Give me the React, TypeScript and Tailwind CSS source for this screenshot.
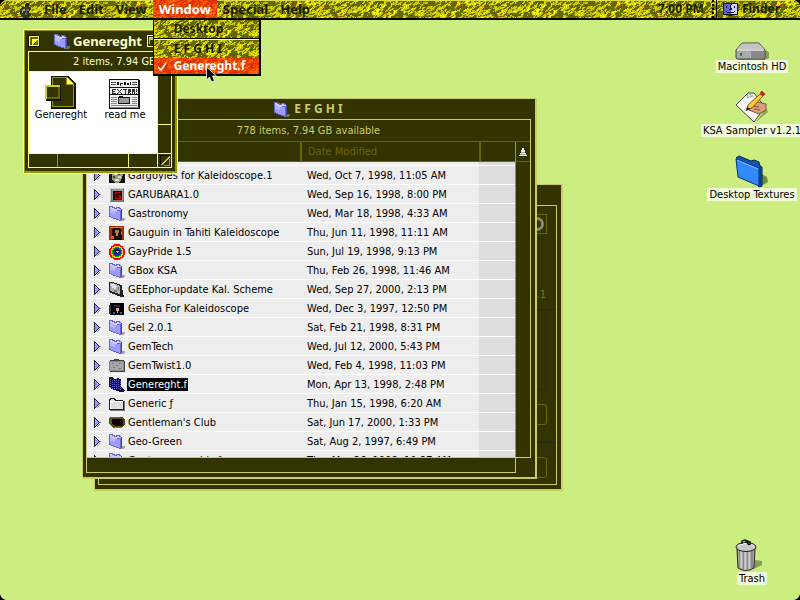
import type { ReactNode } from "react";

/* ---------- texture of the menu theme ---------- */

const TILE_W = 160;
const TILE_H = 20;

function hash(a: number, b: number) {
  let h = (a * 374761393 + b * 668265263) | 0;
  h = Math.imul(h ^ (h >>> 13), 1274126177);
  return ((h ^ (h >>> 16)) >>> 0) / 4294967295;
}

function smoothNoise(u: number, v: number) {
  const i = Math.floor(u);
  const j = Math.floor(v);
  const f = u - i;
  const g = v - j;
  const top = hash(i, j) * (1 - f) + hash(i + 1, j) * f;
  const low = hash(i, j + 1) * (1 - f) + hash(i + 1, j + 1) * f;
  return top * (1 - g) + low * g;
}

/* One path per tone: 0 deep, 1 middle, 2 light, 3 glow, 4 red fleck, 5 green fleck. */
function buildTexture() {
  const paths = ["", "", "", "", "", ""];
  for (let y = 0; y < TILE_H; y++) {
    for (let x = 0; x < TILE_W; x++) {
      const n = smoothNoise((x - y + 400) / 4, (x + y * 1.4) / 2.2) + (hash(x + 900, y) - 0.5) * 0.3;
      const fleck = hash(x, y + 500);
      let tone = n < 0.49 ? 0 : n < 0.55 ? 1 : n < 0.84 ? 2 : 3;
      if (fleck > 0.988) tone = 4;
      else if (fleck < 0.006) tone = 5;
      paths[tone] += `M${x} ${y}h1v1h-1z`;
    }
  }
  return paths;
}

const TEXTURE = buildTexture();
const GOLD = ["#666600", "#999900", "#cccc00", "#ffff00", "#ff6600", "#339900"];
const FIRE = ["#dd3300", "#ee4400", "#ff5500", "#ff7700", "#cc2200", "#996600"];

function Texture({ id, tones }: { id: string; tones: string[] }) {
  return (
    <svg className="absolute inset-0 h-full w-full" shapeRendering="crispEdges" aria-hidden="true">
      <defs>
        <pattern id={id} width={TILE_W} height={TILE_H} patternUnits="userSpaceOnUse">
          {TEXTURE.map((d, i) => (
            <path key={i} d={d} fill={tones[i]} />
          ))}
        </pattern>
      </defs>
      <rect width="100%" height="100%" fill={`url(#${id})`} />
    </svg>
  );
}

/* ---------- small icons ---------- */

type IconKind =
  | "folder" | "gargoyle" | "garubara" | "gauguin" | "pride" | "grayfolder"
  | "geisha" | "twist" | "selected" | "plain" | "club";

function FolderArt() {
  return (
    <>
      <path d="M12 13h4v2h-1v1h-3z" fill="#888888" opacity=".7" />
      <path d="M0 1h4v1h2v1h1V2h4v1h1v1h1v11h-1v1h-2v-1H7v-1H4v-1H2v-1H0z" fill="#6666cc" />
      <path d="M1 2h2v1h2v1h3V3h2v1h2v1H8v1H5V5H3V4H1z" fill="#ccccff" />
      <path d="M1 4h2v1h2v1h7v9h-2v-1H7v-1H4v-1H2v-1H1z" fill="#9c9cff" />
      <path d="M1 4h2v1h2v1h1v3H4V8H1z" fill="#b8b8ff" />
      <path d="M11 5h1v10h-1z" fill="#6666cc" />
      <path d="M12 4h1v11h-1z" fill="#444499" />
    </>
  );
}

function MiniIcon({ kind }: { kind: IconKind }) {
  const art: Record<IconKind, ReactNode> = {
    folder: <FolderArt />,
    gargoyle: (
      <>
        <path d="M0 4h16v12H0z" fill="#111" />
        <path d="M3 4h9l2 4-2 6-3 2H6l-3-4z" fill="#998" />
        <path d="M5 6h3v2H5zM9 9h3v2H9zM6 12h4v2H6z" fill="#ddc" />
        <path d="M4 9h2v2H4zM9 6h2v2H9z" fill="#443" />
      </>
    ),
    garubara: (
      <>
        <path d="M1 2h14v14H1z" fill="#777" />
        <path d="M1 2h13v1H2v12H1z" fill="#ccc" />
        <path d="M3 3h11v11H3z" fill="#999" />
        <path d="M4 5h9v9H4z" fill="#300" />
        <path d="M6 6h5v1H7v5h3v-2H9V9h3v4H6z" fill="#c00" />
      </>
    ),
    gauguin: (
      <>
        <path d="M0 2h15v14H0z" fill="#a33000" />
        <path d="M1 3h13v1H1z" fill="#dd7722" />
        <path d="M4 4h7l2 5v7H3V7z" fill="#150800" />
        <path d="M6 6h4v3H9v3H7V9H6z" fill="#bb7744" />
        <path d="M2 12h3v3H2zM12 8h1v3h-1z" fill="#ee5522" />
      </>
    ),
    pride: (
      <>
        <circle cx="8" cy="9" r="8" fill="#f00" />
        <circle cx="8" cy="9" r="6.500" fill="#fc0" />
        <circle cx="8" cy="9" r="5" fill="#0a0" />
        <circle cx="8" cy="9" r="4" fill="#22c" />
        <path d="M5 7h6l-3 5z" fill="#111" />
        <path d="M6 8h4l-2 2z" fill="#e8a" />
      </>
    ),
    grayfolder: (
      <>
        <path d="M0 1h4l5 2 4 1 1 10 2 1-3 1-4-1-9-4z" fill="#222" />
        <path d="M1 2h3l5 2 2 2v7l-10-3z" fill="#aab0aa" />
        <path d="M2 3h3l3 2-1 3-4-1z" fill="#dde0dd" />
        <path d="M5 9h3v2H5zM9 6h1v3H9z" fill="#778077" />
      </>
    ),
    geisha: (
      <>
        <path d="M1 3h14v12H1z" fill="#000" />
        <path d="M0 5h2v9H0z" fill="#333" />
        <path d="M5 5h6v2H5z" fill="#225" />
        <path d="M7 8h3v3H9v2H8v-2H7z" fill="#da7" />
        <path d="M4 12h2v2H4zM11 12h2v2h-2z" fill="#268" />
      </>
    ),
    twist: (
      <>
        <path d="M1 3h4V2h5v1h5v1h1v11H1z" fill="#444" />
        <path d="M0 4h15v10H0z" fill="#888" />
        <path d="M1 5h13v8H1z" fill="#a5a5a5" />
        <path d="M3 6h2v1H3zM7 8h2v1H7zM10 6h2v1h-2zM4 10h2v1H4zM10 11h2v1h-2z" fill="#777" />
      </>
    ),
    selected: (
      <>
        <path d="M0 1h3l3 2h2V2l4 1v8l4 3-2 2h-3l-6-2-5-3z" fill="#111144" />
        {[3, 5, 7, 9, 11].map((y) => (
          <path key={y} d={`M1 ${y}h1v1h-1zM3 ${y + 1}h1v1h-1zM5 ${y + 1}h1v1h-1zM7 ${y + 1}h1v1h-1zM9 ${y + 1}h1v1h-1zM11 ${y + 2}h1v1h-1z`} fill="#6666cc" />
        ))}
      </>
    ),
    plain: (
      <>
        <path d="M1 15h14V6h1v10H1z" fill="#777" />
        <path d="M0 4h1V3h5v1h1v1h7v1h1v9H0z" fill="#222" />
        <path d="M1 5h1V4h3v1h1v1h8v8H1z" fill="#ddd" />
        <path d="M1 6h13v1H2v7H1z" fill="#fff" />
      </>
    ),
    club: (
      <>
        <path d="M1 3h13l2 3v4l-3 4H4l-3-3-1-2V5z" fill="#664411" />
        <path d="M2 3h9v1H2zM1 5h1v5H1z" fill="#338833" />
        <path d="M3 5h10l1 2v3l-2 2H5L3 10z" fill="#0c0500" />
        <path d="M5 13h8v1H5z" fill="#bb6622" />
      </>
    ),
  };
  return (
    <svg width="16" height="17" viewBox="0 0 16 17" shapeRendering="crispEdges" aria-hidden="true" className="shrink-0">
      {art[kind]}
    </svg>
  );
}

function Disclosure() {
  return (
    <button type="button" aria-label="Expand folder" className="shrink-0">
      <svg width="7" height="11" viewBox="0 0 7 11" shapeRendering="crispEdges" className="block">
        <path d="M0 0h1v1h1v1h1v1h1v1h1v1h1v1H5v1H4v1H3v1H2v1H1v1H0z" fill="#222244" />
        <path d="M1 2h1v1h1v1h1v1h1v1H4v1H3v1H2v1H1z" fill="#9999ff" />
        <path d="M6 5h1v1H6zM5 7h1v1H5zM4 8h1v1H4zM3 9h1v1H3z" fill="#999999" />
      </svg>
    </button>
  );
}

/* ---------- menu bar ---------- */

function AppleMark() {
  return (
    <svg width="12" height="15" viewBox="0 0 12 15" shapeRendering="crispEdges" className="block">
      <path d="M6 0h3v2L7 4H5V2z" fill="#222211" />
      <path d="M2 4h3l1 1 1-1h3l1 2-2 2v2l2 2-2 3H3L1 12 0 9V6z" fill="#333322" />
      <path d="M3 6h2v2H3v2H2V7h1z" fill="#aaaa88" />
      <path d="M6 6h3v2H7v4H5v-2h1z" fill="#666655" />
    </svg>
  );
}

function FinderFace() {
  return (
    <svg width="15" height="15" viewBox="0 0 15 15" shapeRendering="crispEdges" aria-hidden="true">
      <path d="M0 1h15v12H9v1H6v-1H0z" fill="#111133" />
      <path d="M1 2h7v1H7v4h1v5H1z" fill="#6666cc" />
      <path d="M8 2h6v10H8V7H7V4h1z" fill="#ccccff" />
      <path d="M3 4h1v2H3zM11 4h1v2h-1zM3 9h1v1h7V9h1v1h-1v1H4v-1H3zM8 2h1v1H8v3h1v2H6V7h1V3h1z" fill="#111133" />
    </svg>
  );
}

function Menu({ label }: { label: string }) {
  return (
    <button type="button" className="relative h-[18px] px-1.5 leading-[18px]">
      {label}
    </button>
  );
}

function MenuBar() {
  return (
    <header className="relative z-30 flex h-5 shrink-0 items-start border-b-2 border-black font-['Noto_Sans',sans-serif] text-[13px] font-bold text-[#1c1c00]">
      <Texture id="gold-bar" tones={GOLD} />
      <div className="absolute inset-x-0 top-0 h-px bg-[#dddd44]" />
      <nav className="flex items-start pl-3.5">
        <button type="button" aria-label="Apple menu" className="relative h-[18px] px-1.5 pt-0.5">
          <AppleMark />
        </button>
        <Menu label="File" />
        <Menu label="Edit" />
        <Menu label="View" />
        <div className="relative">
          <button type="button" aria-expanded="true" className="relative h-[18px] px-1.5 leading-[18px] text-white">
            <Texture id="fire-title" tones={FIRE} />
            <span className="relative">Window</span>
          </button>
          <div className="absolute left-0 top-5 w-[108px] border-b-2 border-l border-r-2 border-black text-xs">
            <div className="relative">
              <Texture id="gold-menu" tones={GOLD} />
              <button type="button" className="relative block h-[18px] w-full pl-5 text-left leading-4">
                Desktop
              </button>
              <div className="relative h-0.5 border-b border-t border-b-[#ffffcc] border-t-black" />
              <button type="button" className="relative block h-[18px] w-full pl-5 text-left leading-[18px]">
                E F G H I
              </button>
              <button type="button" className="relative flex h-4 w-full items-center pl-1 text-left leading-4 text-white">
                <Texture id="fire-item" tones={FIRE} />
                <svg width="9" height="9" viewBox="0 0 9 9" className="relative mr-[7px]" aria-hidden="true">
                  <path d="M0 5l3 3 5-7" fill="none" stroke="#fff" strokeWidth="1.500" />
                </svg>
                <span className="relative">Genereght.f</span>
              </button>
            </div>
          </div>
        </div>
        <Menu label="Special" />
        <Menu label="Help" />
      </nav>
      <div className="relative ml-auto flex h-[18px] items-center pr-5 text-xs">
        <span>7:00 PM</span>
        <span className="ml-2 h-full w-1 border-l-2 border-dotted border-black" />
        <span className="mr-1.5 h-full w-px bg-black" />
        <button type="button" className="flex items-center gap-1">
          <FinderFace />
          Finder
        </button>
      </div>
    </header>
  );
}

/* ---------- desktop icons ---------- */

function DesktopIcon({ label, children }: { label: string; children: ReactNode }) {
  return (
    <button type="button" className="flex h-16 flex-col items-center justify-end">
      {children}
      <span className="whitespace-nowrap bg-[#f1fadb] px-0.5 leading-[13px]">{label}</span>
    </button>
  );
}

function HardDisk() {
  return (
    <svg width="34" height="18" viewBox="0 0 34 18" aria-hidden="true">
      <path d="M30 8l4 2v6l-4 2H4v-1h26z" fill="#8aa055" />
      <path d="M1 8L7 1h17l6 7v8l-1 1H2l-1-1z" fill="#aaa" stroke="#444" />
      <path d="M7 1.500h17L29 7H2z" fill="#c4c4c4" />
      <path d="M2 8h27" stroke="#f4f4f4" />
      <path d="M16 9h13v7H16z" fill="#888" />
      <path d="M5 11h2v2H5z" fill="#c00" />
      <path d="M5 12h2v2H5z" fill="#0a0" />
    </svg>
  );
}

function Sampler() {
  return (
    <svg width="36" height="33" viewBox="0 0 36 33" aria-hidden="true">
      <path d="M22 31l12-10-2-4z" fill="#8fa65c" />
      <path d="M2 14L14 2h6l11 14-11 15z" fill="#f6f6f6" stroke="#444" />
      <path d="M14 2l-1 5 6-2z" fill="#ddd" stroke="#666" strokeWidth=".5" />
      <path d="M15 19l3-5 6-3 8 2v6l-7 4-5-2z" fill="#d9a27d" stroke="#6a3a20" strokeWidth=".8" />
      <path d="M19 15l6 1M20 18l6 1" stroke="#8a5030" />
      <path d="M13 18l1-4L26 3l3 2-11 12z" fill="#ffcc33" stroke="#663300" strokeWidth=".8" />
      <path d="M26 2l2-2 3 3-2 2z" fill="#dd2222" stroke="#881111" strokeWidth=".5" />
      <path d="M12 20l1-4 3 2z" fill="#111" />
    </svg>
  );
}

function BlueFolder() {
  return (
    <svg width="34" height="33" viewBox="0 0 34 33" aria-hidden="true">
      <path d="M26 31l7-4-1-5-7-4z" fill="#6d8f45" />
      <path d="M1 3l3-2 12 5 3-1 5 2 1 4 2 1v19l-3 1z" fill="#1155bb" stroke="#00224d" />
      <path d="M1 4l23 9v18L3 22z" fill="#3388ff" stroke="#003377" />
      <path d="M2 5l21 9" stroke="#88bbff" />
      <path d="M25 12v18" stroke="#0a3f99" strokeWidth="2" />
    </svg>
  );
}

function TrashCan() {
  return (
    <svg width="34" height="33" viewBox="0 0 34 33" aria-hidden="true">
      <path d="M19 30l8-4v-4l-7-1z" fill="#8a9e55" />
      <path d="M2 10h18l-1 19q-8 5-16 0z" fill="#aaa" stroke="#222" />
      <path d="M5 12v17M9 13v17M13 13v17M17 12v17" stroke="#666" />
      <path d="M6 12v17M10 13v18M14 13v17" stroke="#eee" />
      <ellipse cx="11" cy="8" rx="10" ry="4.500" fill="#c8c8c8" stroke="#222" />
      <path d="M3 7q8-5 16 0" fill="none" stroke="#f5f5f5" />
      <path d="M7 5V2l3-1 5 2v3M10 1l4 5" fill="none" stroke="#111" strokeWidth="1.500" />
    </svg>
  );
}

/* ---------- windows ---------- */

function BackWindow() {
  return (
    <section className="absolute left-[94px] top-[164px] flex h-[307px] w-[469px] flex-col border-b-2 border-l border-r-2 border-t border-[#cccc66] bg-[#333300] pb-1 pl-[3px] pr-1 pt-5">
      <div className="flex flex-1 flex-col items-end border border-[#cccc66] pt-2 text-[#777733]">
        <div className="mr-[9px] flex size-5 items-center justify-center border border-[#666600]">
          <div className="size-3.5 rounded-full border-[3px] border-[#888877]" />
        </div>
        <span className="mr-[10px] mt-[53px] leading-4">v1.1</span>
        <div className="mt-[6px] h-px w-full bg-[#252522]" />
        <div className="mr-[10px] h-[80px] w-6 border-b border-r border-[#252533]" />
        <div className="mr-[9px] mt-3.5 h-[21px] w-16 rounded-[3px] border border-[#666600]" />
        <div className="mt-[17px] h-px w-full bg-[#252522]" />
        <div className="mr-[9px] mt-3.5 h-[21px] w-16 rounded-[3px] border border-[#666600]" />
      </div>
    </section>
  );
}

const FILES: { name: string; date: string; icon: IconKind; selected?: boolean }[] = [
  { name: "Gargoyles for Kaleidoscope.1", date: "Wed, Oct 7, 1998, 11:05 AM", icon: "gargoyle" },
  { name: "GARUBARA1.0", date: "Wed, Sep 16, 1998, 8:00 PM", icon: "garubara" },
  { name: "Gastronomy", date: "Wed, Mar 18, 1998, 4:33 AM", icon: "folder" },
  { name: "Gauguin in Tahiti Kaleidoscope", date: "Thu, Jun 11, 1998, 11:11 AM", icon: "gauguin" },
  { name: "GayPride 1.5", date: "Sun, Jul 19, 1998, 9:13 PM", icon: "pride" },
  { name: "GBox KSA", date: "Thu, Feb 26, 1998, 11:46 AM", icon: "folder" },
  { name: "GEEphor-update Kal. Scheme", date: "Wed, Sep 27, 2000, 2:13 PM", icon: "grayfolder" },
  { name: "Geisha For Kaleidoscope", date: "Wed, Dec 3, 1997, 12:50 PM", icon: "geisha" },
  { name: "Gel 2.0.1", date: "Sat, Feb 21, 1998, 8:31 PM", icon: "folder" },
  { name: "GemTech", date: "Wed, Jul 12, 2000, 5:43 PM", icon: "folder" },
  { name: "GemTwist1.0", date: "Wed, Feb 4, 1998, 11:03 PM", icon: "twist" },
  { name: "Genereght.f", date: "Mon, Apr 13, 1998, 2:48 PM", icon: "selected", selected: true },
  { name: "Generic ƒ", date: "Thu, Jan 15, 1998, 6:20 AM", icon: "plain" },
  { name: "Gentleman's Club", date: "Sat, Jun 17, 2000, 1:33 PM", icon: "club" },
  { name: "Geo-Green", date: "Sat, Aug 2, 1997, 6:49 PM", icon: "folder" },
  { name: "Geotropomorphic ƒ", date: "Thu, Mar 26, 1998, 10:27 AM", icon: "folder" },
];

function ListWindow() {
  return (
    <section className="absolute left-[82px] top-[78px] flex w-[455px] flex-col border-b-2 border-l border-r-2 border-t border-[#cccc66] bg-[#333300] pb-1 pl-[3px] pr-1">
      <h2 className="flex h-5 items-center justify-center gap-1 font-['Noto_Sans',sans-serif] text-xs font-bold text-[#cccc66]">
        <svg width="16" height="17" viewBox="0 0 16 17" shapeRendering="crispEdges" aria-hidden="true">
          <FolderArt />
        </svg>
        E F G H I
      </h2>
      <div className="border border-[#cccc66]">
        <p className="h-[22px] border-b border-[#666600] text-center leading-[21px] text-[#cccc66]">
          778 items, 7.94 GB available
        </p>
        <div className="flex h-[315px]">
          <div className="flex-1 overflow-hidden">
            <table className="w-full table-fixed border-separate border-spacing-0 text-left">
              <colgroup>
                <col className="w-[213px]" />
                <col />
                <col className="w-[36px]" />
              </colgroup>
              <thead>
                <tr className="text-[#666600]">
                  <th className="h-5 border-b border-[#666600] p-0" />
                  <th className="h-5 border-b border-l-2 border-[#666600] p-0 pl-1.5 font-normal leading-4">Date Modified</th>
                  <th className="h-5 border-b border-l-2 border-[#666600] p-0" />
                </tr>
              </thead>
              <tbody className="bg-[#eeeeee] text-black">
                <tr>
                  <td colSpan={2} className="h-1 border-b border-white p-0" />
                  <td className="h-1 border-b border-white bg-[#dddddd] p-0" />
                </tr>
                {FILES.map((f) => (
                  <tr key={f.name}>
                    <td className="h-[19px] border-b border-white p-0">
                      <div className="flex h-[18px] items-center whitespace-nowrap pl-[7px]">
                        <Disclosure />
                        <span className="ml-2 mr-[2px] flex">
                          <MiniIcon kind={f.icon} />
                        </span>
                        <span className={f.selected ? "bg-black px-px leading-[13px] text-white" : "px-px leading-[13px]"}>
                          {f.name}
                        </span>
                      </div>
                    </td>
                    <td className="h-[19px] border-b border-white p-0 pl-[7px] leading-[17px]">{f.date}</td>
                    <td className="h-[19px] border-b border-white bg-[#dddddd] p-0" />
                  </tr>
                ))}
              </tbody>
            </table>
          </div>
          <div className="flex w-[15px] flex-col border-l border-[#999933]">
            <button type="button" aria-label="Scroll up" className="flex h-5 items-center justify-center border-b border-[#666600]">
              <svg width="8" height="8" viewBox="0 0 8 8" shapeRendering="crispEdges">
                <path d="M3 0h2v2H3zM2 2h4v2H2zM1 5h6v1H1zM0 7h8v1H0z" fill="#eee" />
                <path d="M2 4h4v1H2zM1 6h6v1H1z" fill="#aaa" />
              </svg>
            </button>
          </div>
        </div>
      </div>
      <div className="mr-[15px] h-[15px] border-b border-l border-r border-[#cccc66]" />
    </section>
  );
}

function SuitcaseDoc() {
  return (
    <svg width="32" height="33" viewBox="0 0 32 33" shapeRendering="crispEdges" aria-hidden="true">
      <path d="M6 0h17l8 7v26H6z" fill="#111100" />
      <path d="M7 1h15l7 6v24H7z" fill="#999900" />
      <path d="M8 2h13v7h7v21H8z" fill="#333300" />
      <path d="M22 2l6 6h-6z" fill="#ffff66" />
      <path d="M0 9h16v16H1z" fill="#111100" />
      <path d="M0 9h15v14H0z" fill="#cccc33" />
      <path d="M2 11h13v12H2z" fill="#666600" />
      <path d="M2 11h11v10H2z" fill="#333300" />
    </svg>
  );
}

function Newspaper() {
  return (
    <svg width="32" height="30" viewBox="0 0 32 30" shapeRendering="crispEdges" aria-hidden="true">
      <path d="M0 0h30v1h1v29H0z" fill="#111" />
      <path d="M1 1h28v27H1z" fill="#eee" />
      <path d="M1 28h29v1H1z" fill="#888" />
      <path d="M2 3h5v1H2zM2 5h5v1H2zM23 3h5v1h-5zM23 5h5v1h-5z" fill="#555" />
      <path d="M8 3h2v3H8zM11 4h3v1h-2v2h-1zM15 3h2v3h-2zM18 4h2v2h-2zM21 3h1v3h-1z" fill="#111" />
      <path d="M1 8h28v1H1zM1 15h28v1H1z" fill="#111" />
      <path d="M3 10h4v1H4v1h2v1H4v1h3v1H3zM8 10h1v1h1v1h1v-1h1v-1h1v1h-1v1h-1v1h1v1h1v1h-1v-1h-1v-1h-1v1H9v1H8v-1h1v-1h1v-1H9v-1H8zM14 10h4v1h-1v4h-1v-4h-2zM19 10h3v3h-1v1h1v1h-1v-1h-1v1h-1zM23 10h3v5h-1v-2h-1v2h-1zM27 10h1v3h-1zM27 14h1v1h-1z" fill="#333" />
      <path d="M2 18h6v1H2zM2 20h6v1H2zM2 22h6v1H2zM2 24h6v1H2zM2 26h26v1H2zM23 18h5v1h-5zM23 20h5v1h-5zM23 22h5v1h-5zM23 24h5v1h-5z" fill="#888" />
      <path d="M10 17h4v1h7v7H9v-7z" fill="#111" />
      <path d="M10 19h10v5H10z" fill="#999" />
    </svg>
  );
}

function FrontWindow() {
  return (
    <section className="absolute left-[23px] top-[9px] z-10 w-[155px] border border-[#ffffaa] bg-[#333300]">
      <div className="border border-b-2 border-r-2 border-[#999900] pb-[3px] pl-[3px] pr-[3px]">
        <div className="flex h-5 items-center">
          <button type="button" aria-label="Close window" className="flex size-3 border border-[#111100] bg-[#cccc33]">
            <svg width="10" height="10" viewBox="0 0 10 10" shapeRendering="crispEdges" aria-hidden="true">
              <path d="M0 0h10v10H0z" fill="#ffff66" />
              <path d="M1 1h8v8H1z" fill="#666600" />
              <path d="M3 3h6v1H8v1H7v1H6v1H5v1H4v1H3z" fill="#ffff33" />
            </svg>
          </button>
          <h2 className="ml-3.5 flex flex-1 items-center gap-[3px] font-['Noto_Sans',sans-serif] text-[13px] font-bold leading-5 text-[#ffffcc]">
            <svg width="16" height="17" viewBox="0 0 16 17" shapeRendering="crispEdges" aria-hidden="true">
              <FolderArt />
            </svg>
            Genereght
          </h2>
          <button type="button" aria-label="Zoom window" className="mr-[13px] flex size-3 border border-[#ffff66] bg-[#333300]">
            <svg width="10" height="10" viewBox="0 0 10 10" shapeRendering="crispEdges" aria-hidden="true">
              <path d="M1 1h4v3H2v4H1zM6 2h2v1H6z" fill="#cccc66" />
            </svg>
          </button>
        </div>
        <div className="border border-[#ffff66]">
          <p className="h-5 overflow-hidden whitespace-nowrap border-b border-[#ffff66] pl-[44px] leading-[19px] text-[#ffffcc]">
            2 items, 7.94 GB
          </p>
          <div className="flex">
            <div className="flex h-[81px] w-[128px] items-start bg-white pt-1 text-black">
              <button type="button" className="flex w-16 flex-col items-center">
                <SuitcaseDoc />
                <span className="leading-3">Genereght</span>
              </button>
              <button type="button" className="flex w-16 flex-col items-center pt-[3px]">
                <Newspaper />
                <span className="leading-3">read me</span>
              </button>
            </div>
            <div className="flex-1 border-l border-[#ffff66]">
              <div className="h-[53px] border-b border-[#ffff66]" />
            </div>
          </div>
          <div className="flex h-3.5 border-t border-[#ffff66]">
            <div className="w-[29px] border-r border-[#999900]" />
            <div className="w-[71px] border-r border-[#ffff66]" />
            <div className="w-[29px] border-r border-[#ffff66]" />
            <svg width="11" height="11" viewBox="0 0 11 11" shapeRendering="crispEdges" className="ml-0.5 mt-px" aria-hidden="true">
              <path d="M0 0h10v1H1v9H0z" fill="#111100" />
              <path d="M1 9h1V8h1V7h1V6h1V5h1V4h1V3h1V2h1V1h1v2H9v1H8v1H7v1H6v1H5v1H4v1H3v1H1z" fill="#cccc33" />
              <path d="M10 4v7H4v-1h5V4z" fill="#999900" />
            </svg>
          </div>
        </div>
      </div>
    </section>
  );
}

function Pointer() {
  return (
    <svg width="12" height="18" viewBox="0 0 12 18" className="pointer-events-none absolute left-[206px] top-[66px] z-40" aria-hidden="true">
      <path d="M.5 1v13l3-3 2 5 3-1-2-5h4z" fill="#000" stroke="#fff" strokeWidth=".8" />
    </svg>
  );
}

export default function App() {
  return (
    <div className="relative flex h-screen min-h-[600px] flex-col overflow-hidden bg-[#ccee80] font-['DejaVu_Sans_Condensed','DejaVu_Sans',sans-serif] text-[11px] text-black">
      <MenuBar />
      <main className="relative flex flex-1">
        <BackWindow />
        <ListWindow />
        <FrontWindow />
        <div className="ml-auto flex w-24 flex-col items-center pb-[15px]">
          <div className="-mt-[11px] flex flex-col items-center">
            <DesktopIcon label="Macintosh HD"><HardDisk /></DesktopIcon>
            <DesktopIcon label="KSA Sampler v1.2.1"><Sampler /></DesktopIcon>
            <DesktopIcon label="Desktop Textures"><BlueFolder /></DesktopIcon>
          </div>
          <div className="mt-auto">
            <DesktopIcon label="Trash"><TrashCan /></DesktopIcon>
          </div>
        </div>
      </main>
      <Pointer />
      <svg width="6" height="6" viewBox="0 0 6 6" className="absolute left-0 top-0 z-40" aria-hidden="true"><path d="M0 0h6Q1 1 0 6z" /></svg>
      <svg width="6" height="6" viewBox="0 0 6 6" className="absolute right-0 top-0 z-40" aria-hidden="true"><path d="M6 0H0q5 1 6 6z" /></svg>
      <svg width="6" height="6" viewBox="0 0 6 6" className="absolute bottom-0 left-0 z-40" aria-hidden="true"><path d="M0 6h6Q1 5 0 0z" /></svg>
      <svg width="6" height="6" viewBox="0 0 6 6" className="absolute bottom-0 right-0 z-40" aria-hidden="true"><path d="M6 6H0q5-1 6-6z" /></svg>
    </div>
  );
}
